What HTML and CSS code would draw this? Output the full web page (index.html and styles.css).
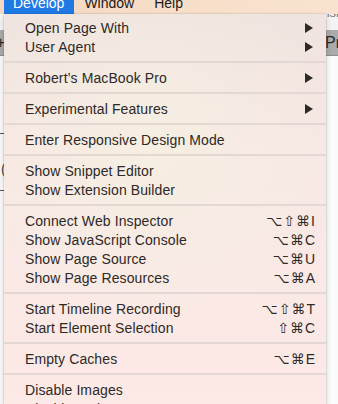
FILE: index.html
```html
<!DOCTYPE html>
<html lang="en">
<head>
  <meta charset="UTF-8" />
  <meta name="viewport" content="width=device-width, initial-scale=1.0" />
  <title>Develop menu</title>
  <link rel="stylesheet" href="styles.css">
</head>

<body>
  <div class="menubar">
    <span class="menubar-item active">Develop</span>
    <span class="menubar-item">Window</span>
    <span class="menubar-item">Help</span>
  </div>

  <!-- the Safari window behind the menu -->
  <div class="window">
    <div class="window-top"><span class="window-title">Provisioning</span></div>
    <div class="window-toolbar">
      <span class="tool-left">+</span>
      <span class="tool-right">Pr</span>
    </div>
    <div class="window-body">
      <div class="rule rule-a"></div>
      <div class="paren">(</div>
      <div class="rule rule-b"></div>
    </div>
  </div>

  <div class="menu">
    <div class="item">Open Page With<span class="arrow"></span></div>
    <div class="item">User Agent<span class="arrow"></span></div>
    <div class="sep"></div>
    <div class="item">Robert’s MacBook Pro<span class="arrow"></span></div>
    <div class="sep"></div>
    <div class="item">Experimental Features<span class="arrow"></span></div>
    <div class="sep"></div>
    <div class="item">Enter Responsive Design Mode</div>
    <div class="sep"></div>
    <div class="item">Show Snippet Editor</div>
    <div class="item">Show Extension Builder</div>
    <div class="sep"></div>
    <div class="item">Connect Web Inspector<span class="keys">⌥⇧⌘I</span></div>
    <div class="item">Show JavaScript Console<span class="keys">⌥⌘C</span></div>
    <div class="item">Show Page Source<span class="keys">⌥⌘U</span></div>
    <div class="item">Show Page Resources<span class="keys">⌥⌘A</span></div>
    <div class="sep"></div>
    <div class="item">Start Timeline Recording<span class="keys">⌥⇧⌘T</span></div>
    <div class="item">Start Element Selection<span class="keys">⇧⌘C</span></div>
    <div class="sep"></div>
    <div class="item">Empty Caches<span class="keys">⌥⌘E</span></div>
    <div class="sep"></div>
    <div class="item">Disable Images</div>
    <div class="item">Disable Styles</div>
  </div>
</body>
</html>
```

FILE: styles.css
```css
body {
  margin: 0;
  width: 338px;
  height: 404px;
  overflow: hidden;
  position: relative;
  font-family: "Liberation Sans", "DejaVu Sans", sans-serif;
  font-size: 14px;
  background: #fafafa;
}
.menubar {
  height: 14px;
  overflow: hidden;
  display: flex;
  padding-left: 4px;
  background: linear-gradient(90deg, #f4d8c3, #f7dfca 60%, #f9e3d0);
}
.menubar-item {
  margin-top: -8px;
  height: 22px;
  line-height: 22px;
  padding: 0 10px 0 10px;
  color: #1c1a19;
}
.menubar-item.active {
  padding-left: 9px;
  background: #1f79e3;
  color: white;
}
.window {
  display: flex;
  flex-direction: column;
}
.window-top {
  height: 16px;
  background: #f4f4f4;
  overflow: hidden;
}
.window-title {
  display: block;
  margin-top: -9px;
  margin-left: 300px;
  color: #777;
  font-size: 13px;
}
.window-toolbar {
  height: 25px;
  background: #ababab;
  border-bottom: 1px solid #8f8f8f;
  display: flex;
  justify-content: space-between;
  align-items: center;
  color: #2a2a2a;
  font-size: 16px;
}
.tool-left {
  margin-left: -4px;
}
.tool-right {
  margin-right: -3px;
}
.window-body {
  height: 300px;
  background: #fbfbfb;
  padding-top: 77px;
}
.rule {
  width: 4px;
  height: 1px;
  background: #555;
}
.paren {
  margin-top: 28px;
  margin-left: 1px;
  font-size: 14px;
  line-height: 14px;
  color: #444;
}
.rule-b {
  margin-top: 14px;
}
.menu {
  position: absolute;
  left: 4px;
  top: 14px;
  width: 322px;
  height: 390px;
  overflow: hidden;
  padding-top: 4px;
  box-sizing: border-box;
  background:
    radial-gradient(ellipse 60% 45% at 45% 35%, rgba(246, 240, 226, 0.9), rgba(246, 240, 226, 0) 100%),
    linear-gradient(180deg, #efe4df 0%, #f6e7e3 30%, #fbe9e6 70%, #fde9e6 100%);
  box-shadow: 0 0 1px rgba(0, 0, 0, 0.35), 0 3px 6px rgba(0, 0, 0, 0.18);
  color: #2d2927;
}
.item {
  height: 19px;
  display: flex;
  align-items: center;
  justify-content: space-between;
  padding: 0 10px 0 21px;
  letter-spacing: 0.1px;
}
.sep {
  height: 2px;
  margin: 5px 0;
  background: #e4d8d4;
}
.arrow {
  width: 0;
  height: 0;
  margin-right: 3px;
  border-left: 8px solid #2d2927;
  border-top: 5px solid transparent;
  border-bottom: 5px solid transparent;
}
.keys {
  letter-spacing: 1px;
  font-size: 14px;
}
```
